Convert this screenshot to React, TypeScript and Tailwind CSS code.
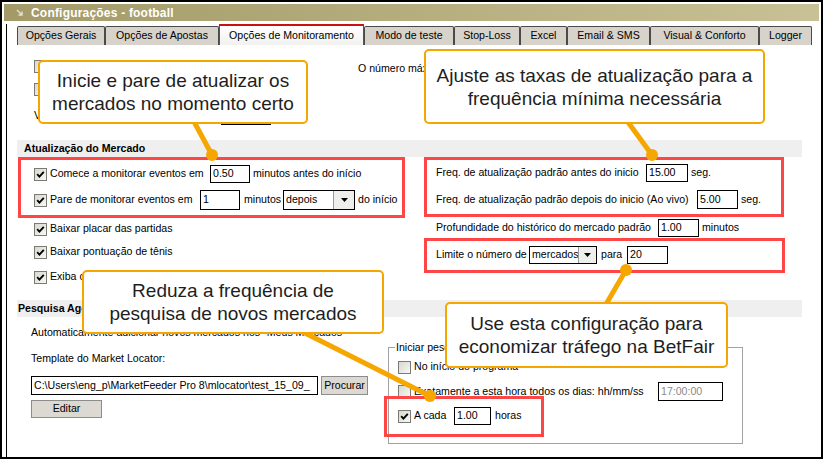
import React from 'react'

const TABS = [
  { label: 'Opções Gerais', w: 'w-[88px]' },
  { label: 'Opções de Apostas', w: 'w-[114px]' },
  { label: 'Opções de Monitoramento', w: 'w-[145px]', active: true },
  { label: 'Modo de teste', w: 'w-[90px]' },
  { label: 'Stop-Loss', w: 'w-[66px]' },
  { label: 'Excel', w: 'w-[47px]' },
  { label: 'Email & SMS', w: 'w-[83px]' },
  { label: 'Visual & Conforto', w: 'w-[109px]' },
  { label: 'Logger', w: 'w-[53px]' },
]

function Check({ on }: { on?: boolean }) {
  return (
    <span className="w-[13px] h-[13px] shrink-0 border border-[#7b7b74] bg-gradient-to-br from-[#d8d8d0] to-[#f8f8f5] flex items-center justify-center">
      {on && (
        <svg width="9" height="9" viewBox="0 0 9 9">
          <path d="M1.2 4.2 L3.4 6.6 L7.8 1.8" stroke="#000" strokeWidth="1.9" fill="none" />
        </svg>
      )}
    </span>
  )
}

function Field({ value, w, h = 'h-[18px]', muted }: { value: string; w: string; h?: string; muted?: boolean }) {
  return (
    <span className={`${w} ${h} shrink-0 border border-black bg-white pl-[2px] flex items-center overflow-hidden whitespace-nowrap ${muted ? 'text-[#8a8a8a]' : ''}`}>
      {value}
    </span>
  )
}

function Combo({ value, w, h, btn }: { value: string; w: string; h: string; btn: string }) {
  return (
    <span className={`${w} ${h} shrink-0 border border-black bg-white flex overflow-hidden`}>
      <span className="flex-1 pl-[2px] flex items-center overflow-hidden whitespace-nowrap">{value}</span>
      <span className={`${btn} shrink-0 border-l border-[#9a9a9a] bg-[#eeeeec] flex items-center justify-center`}>
        <svg width="7" height="4" viewBox="0 0 7 4"><path d="M0 0 H7 L3.5 4 Z" fill="#000" /></svg>
      </span>
    </span>
  )
}

function Callout({ className, lines }: { className: string; lines: string[] }) {
  return (
    <div className={`absolute ${className} bg-white border-2 border-[#f5a600] rounded-[5px] flex flex-col items-center justify-center text-[19px] leading-[23px] text-[#1e1e1e] font-['Liberation_Sans',Arial,sans-serif]`}>
      {lines.map((l) => <span key={l} className="whitespace-nowrap">{l}</span>)}
    </div>
  )
}

export default function App() {
  return (
    <div className="w-[823px] h-[459px] relative bg-white border-2 border-black flex flex-col overflow-hidden font-['Liberation_Sans',Arial,sans-serif] text-[10.6px] text-black">

      {/* Title bar */}
      <div className="mx-[2px] mt-[2px] h-[17px] shrink-0 flex items-center gap-[8px] pl-[12px] bg-gradient-to-r from-[#a39a68] to-[#c8c195]">
        <svg width="7" height="7" viewBox="0 0 7 7">
          <path d="M1 1 L6 6 M6 2.5 V6 H2.5" stroke="#e4e2d6" strokeWidth="1.4" fill="none" />
        </svg>
        <span className="text-white font-bold text-[12px] tracking-[0.2px]">Configurações - football</span>
      </div>

      {/* Body */}
      <div className="flex-1 ml-[4px] mt-[3px] border-l border-black flex flex-col">

        {/* Tabs */}
        <div className="h-[21px] shrink-0 flex items-end pl-[10px]">
          {TABS.map((t) =>
            t.active ? (
              <div key={t.label} className={`${t.w} h-[21px] border-x border-[#555] border-t-2 border-t-[#cc1010] bg-gradient-to-b from-white to-[#f1f1ef] flex items-center justify-center whitespace-nowrap`}>
                {t.label}
              </div>
            ) : (
              <div key={t.label} className={`${t.w} h-[19px] border-l border-t border-r border-[#4a4a4a] rounded-t-[2px] bg-[#d7d3cb] flex items-center justify-center whitespace-nowrap`}>
                {t.label}
              </div>
            )
          )}
        </div>

        {/* Top block (mostly behind callouts) */}
        <div className="h-[95px] shrink-0 flex">
          <div className="w-[351px] pl-[27px] pt-[15px] flex flex-col">
            <div className="h-[13px] flex items-center gap-[3px]"><Check /><span>Verificar mercados suspensos</span></div>
            <div className="h-[13px] mt-[10px] flex items-center gap-[3px]"><Check /><span>Remover mercados fechados</span></div>
            <div className="h-[19px] mt-[10px] flex items-center">
              <span className="w-[187px] whitespace-nowrap">Volume mínimo dos mercados</span>
              <Field value="0" w="w-[50px]" h="h-[19px]" />
            </div>
          </div>
          <div className="pt-[16px] whitespace-nowrap">O número máximo de mercados monitorados</div>
        </div>

        {/* Section 1 header */}
        <div className="ml-[10px] w-[785px] h-[17px] shrink-0 bg-[#efefef] pl-[7px] flex items-center font-bold">
          Atualização do Mercado
        </div>

        {/* Section 1 content */}
        <div className="h-[143px] shrink-0 flex">
          <div className="w-[429px] pl-[27px] flex flex-col">
            <div className="h-[18px] mt-[8px] flex items-center">
              <Check on />
              <span className="w-[163px] pl-[3px] whitespace-nowrap">Comece a monitorar eventos em</span>
              <Field value="0.50" w="w-[40px]" />
              <span className="ml-[3px] whitespace-nowrap">minutos antes do início</span>
            </div>
            <div className="h-[20px] mt-[7px] flex items-center">
              <Check on />
              <span className="w-[153px] pl-[3px] whitespace-nowrap">Pare de monitorar eventos em</span>
              <Field value="1" w="w-[40px]" h="h-[20px]" />
              <span className="w-[43px] pl-[4px] whitespace-nowrap">minutos</span>
              <Combo value="depois" w="w-[72px]" h="h-[20px]" btn="w-[21px]" />
              <span className="ml-[3px] whitespace-nowrap">do início</span>
            </div>
            <div className="h-[18px] mt-[10px] flex items-center gap-[3px]"><Check on /><span>Baixar placar das partidas</span></div>
            <div className="h-[18px] mt-[5px] flex items-center gap-[3px]"><Check on /><span>Baixar pontuação de tênis</span></div>
            <div className="h-[18px] mt-[7px] flex items-center gap-[3px]"><Check on /><span>Exiba cotações em formato americano</span></div>
          </div>
          <div className="flex flex-col">
            <div className="h-[18px] mt-[7px] flex items-center">
              <span className="w-[210px] whitespace-nowrap">Freq. de atualização padrão antes do inicio</span>
              <Field value="15.00" w="w-[42px]" />
              <span className="ml-[3px]">seg.</span>
            </div>
            <div className="h-[19px] mt-[8px] flex items-center">
              <span className="w-[261px] whitespace-nowrap">Freq. de atualização padrão depois do inicio (Ao vivo)</span>
              <Field value="5.00" w="w-[41px]" h="h-[19px]" />
              <span className="ml-[3px]">seg.</span>
            </div>
            <div className="h-[18px] mt-[10px] flex items-center">
              <span className="w-[222px] whitespace-nowrap">Profundidade do histórico do mercado padrão</span>
              <Field value="1.00" w="w-[41px]" />
              <span className="ml-[3px]">minutos</span>
            </div>
            <div className="h-[18px] mt-[9px] flex items-center">
              <span className="w-[93px] whitespace-nowrap">Limite o número de</span>
              <Combo value="mercados" w="w-[68px]" h="h-[18px]" btn="w-[18px]" />
              <span className="w-[30px] pl-[4px]">para</span>
              <Field value="20" w="w-[41px]" />
            </div>
          </div>
        </div>

        {/* Section 2 header */}
        <div className="ml-[10px] w-[785px] h-[17px] shrink-0 bg-[#efefef] pl-[1px] flex items-center font-bold">
          Pesquisa Agendada de Mercados
        </div>

        {/* Section 2 content */}
        <div className="flex-1 flex">
          <div className="w-[381px] pl-[24px] flex flex-col">
            <div className="h-[14px] mt-[9px] flex items-center whitespace-nowrap">Automaticamente adicionar novos mercados nos "Meus Mercados"</div>
            <div className="h-[14px] mt-[12px] flex items-center">Template do Market Locator:</div>
            <div className="mt-[10px] flex items-center gap-[3px]">
              <Field value="C:\Users\eng_p\MarketFeeder Pro 8\mlocator\test_15_09_" w="w-[287px]" h="h-[19px]" />
              <span className="w-[47px] h-[19px] border border-[#8c8c8c] bg-[#dcd9d2] flex items-center justify-center">Procurar</span>
            </div>
            <span className="mt-[5px] w-[71px] h-[18px] border border-[#8c8c8c] bg-[#dcd9d2] flex items-center justify-center">Editar</span>
          </div>
          <div className="mt-[30px] w-[355px] h-[97px] border border-[#a2a2a2] relative pl-[9px] pt-[10px] flex flex-col">
            <span className="absolute -top-[8px] left-[6px] bg-white px-[1px] whitespace-nowrap">Iniciar pesquisa de mercados</span>
            <div className="h-[18px] flex items-center gap-[3px]"><Check /><span>No início do programa</span></div>
            <div className="h-[19px] mt-[6px] flex items-center">
              <Check />
              <span className="w-[247px] pl-[3px] whitespace-nowrap">Exatamente a esta hora todos os dias: hh/mm/ss</span>
              <Field value="17:00:00" w="w-[65px]" h="h-[19px]" muted />
            </div>
            <div className="h-[18px] mt-[6px] flex items-center">
              <Check on />
              <span className="w-[43px] pl-[3px]">A cada</span>
              <Field value="1.00" w="w-[37px]" />
              <span className="ml-[4px]">horas</span>
            </div>
          </div>
        </div>
      </div>

      {/* Annotations */}
      <div className="absolute -left-[2px] -top-[2px] w-[823px] h-[459px] pointer-events-none">
        <div className="absolute left-[18px] top-[157px] w-[387px] h-[61px] border-[3px] border-[#ff4646]" />
        <div className="absolute left-[424px] top-[157px] w-[360px] h-[60px] border-[3px] border-[#ff4646]" />
        <div className="absolute left-[424px] top-[238px] w-[361px] h-[35px] border-[3px] border-[#ff4646]" />
        <div className="absolute left-[384px] top-[396px] w-[160px] h-[41px] border-[3px] border-[#ff4646]" />

        <svg className="absolute left-0 top-0" width="823" height="459">
          <g stroke="#f5a600" strokeWidth="5" strokeLinecap="round">
            <line x1="192" y1="118" x2="212" y2="155" />
            <line x1="625" y1="118" x2="652" y2="155" />
            <line x1="295" y1="328" x2="430" y2="396" />
            <line x1="605" y1="306" x2="626" y2="270" />
          </g>
          <g fill="#f5a600">
            <circle cx="212" cy="155" r="6" />
            <circle cx="652" cy="155" r="6" />
            <circle cx="430" cy="396" r="6" />
            <circle cx="626" cy="270" r="6" />
          </g>
        </svg>

        <Callout className="left-[38px] top-[60px] w-[270px] h-[64px]" lines={['Inicie e pare de atualizar os', 'mercados no momento certo']} />
        <Callout className="left-[424px] top-[49px] w-[341px] h-[75px]" lines={['Ajuste as taxas de atualização para a', 'frequência mínima necessária']} />
        <Callout className="left-[82px] top-[270px] w-[302px] h-[64px]" lines={['Reduza a frequência de', 'pesquisa de novos mercados']} />
        <Callout className="left-[445px] top-[302px] w-[283px] h-[66px]" lines={['Use esta configuração para', 'economizar tráfego na BetFair']} />
      </div>
    </div>
  )
}
